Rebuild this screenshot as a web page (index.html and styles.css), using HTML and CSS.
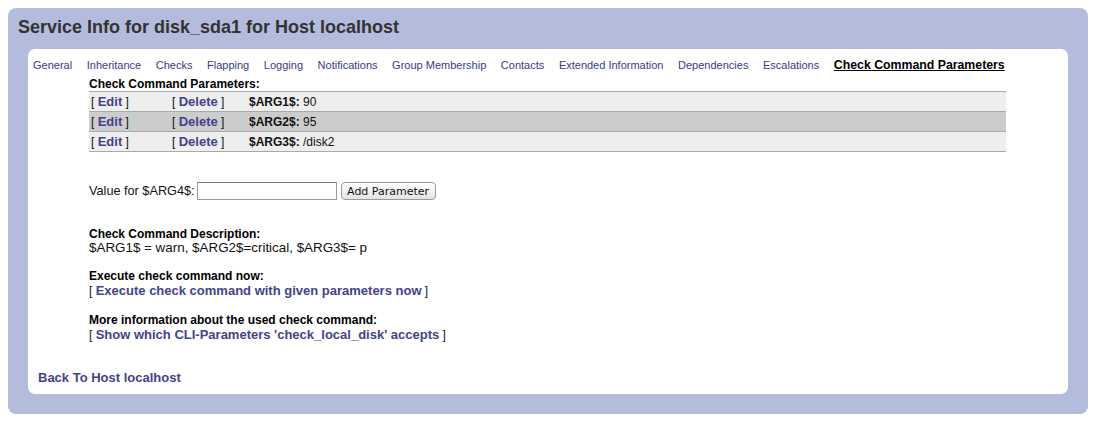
FILE: index.html
```html
<!DOCTYPE html>
<html>
<head>
<meta charset="utf-8">
<link rel="stylesheet" href="styles.css">
</head>
<body>
<div class="panel">
  <h1 class="title">Service Info for disk_sda1 for Host localhost</h1>
  <div class="box">
    <nav class="tabs">
      <a class="tab">General</a>
      <a class="tab">Inheritance</a>
      <a class="tab">Checks</a>
      <a class="tab">Flapping</a>
      <a class="tab">Logging</a>
      <a class="tab">Notifications</a>
      <a class="tab">Group Membership</a>
      <a class="tab">Contacts</a>
      <a class="tab">Extended Information</a>
      <a class="tab">Dependencies</a>
      <a class="tab">Escalations</a>
      <a class="tab active">Check Command Parameters</a>
    </nav>
    <div class="content">
      <div class="heading">Check Command Parameters:</div>
      <div class="params">
        <div class="prow light">
          <span class="c1">[ <a class="lnk">Edit</a> ]</span>
          <span class="c2">[ <a class="lnk">Delete</a> ]</span>
          <span class="c3"><b>$ARG1$:</b> 90</span>
        </div>
        <div class="prow dark">
          <span class="c1">[ <a class="lnk">Edit</a> ]</span>
          <span class="c2">[ <a class="lnk">Delete</a> ]</span>
          <span class="c3"><b>$ARG2$:</b> 95</span>
        </div>
        <div class="prow light last">
          <span class="c1">[ <a class="lnk">Edit</a> ]</span>
          <span class="c2">[ <a class="lnk">Delete</a> ]</span>
          <span class="c3"><b>$ARG3$:</b> /disk2</span>
        </div>
      </div>
      <form class="addform">
        <label class="addlabel">Value for $ARG4$:</label>
        <input class="addinput" type="text">
        <button class="addbtn" type="button">Add Parameter</button>
      </form>
      <div class="block first">
        <div class="heading">Check Command Description:</div>
        <div class="desc">$ARG1$ = warn, $ARG2$=critical, $ARG3$= p</div>
      </div>
      <div class="block">
        <div class="heading">Execute check command now:</div>
        <div class="linkline">[ <a class="lnk">Execute check command with given parameters now</a> ]</div>
      </div>
      <div class="block">
        <div class="heading">More information about the used check command:</div>
        <div class="linkline">[ <a class="lnk">Show which CLI-Parameters 'check_local_disk' accepts</a> ]</div>
      </div>
    </div>
    <a class="lnk back">Back To Host localhost</a>
  </div>
</div>
</body>
</html>
```
FILE: styles.css
```css
html, body {
  margin: 0;
  padding: 0;
  background: #ffffff;
}
body {
  padding: 8px;
  font-family: "Liberation Sans", Arial, sans-serif;
  font-size: 12px;
  color: #111;
}
.panel {
  background: #b4bcdd;
  border-radius: 8px;
  width: 1080px;
  height: 406px;
  box-sizing: border-box;
  padding: 9px 20px 20px 10px;
  display: flex;
  flex-direction: column;
}
.title {
  margin: 0 0 11px 0;
  font-size: 18px;
  line-height: 21px;
  font-weight: bold;
  color: #333333;
}
.box {
  background: #ffffff;
  border-radius: 7px;
  margin-left: 10px;
  flex: 1;
  padding: 10px 0 0 5px;
  display: flex;
  flex-direction: column;
}
.tabs {
  display: flex;
  gap: 14.6px;
  align-items: baseline;
  font-size: 11px;
  line-height: 13px;
}
.tab {
  color: #3b3b82;
  text-decoration: none;
  white-space: nowrap;
}
.tab.active {
  color: #000;
  font-weight: bold;
  font-size: 12.3px;
  text-decoration: underline;
}
.content {
  margin-left: 56px;
  margin-top: 5px;
  width: 917px;
  line-height: 14px;
}
.heading {
  font-weight: bold;
  color: #000;
}
.params {
  display: flex;
  flex-direction: column;
}
.prow {
  display: flex;
  align-items: center;
  height: 19px;
  border-top: 1px solid #aaaaaa;
  padding-left: 2px;
}
.prow.last {
  border-bottom: 1px solid #aaaaaa;
}
.prow.light { background: #eeeeee; }
.prow.dark { background: #cccccc; }
.c1 { width: 81px; }
.c2 { width: 77px; }
.lnk {
  color: #43438a;
  font-weight: bold;
  font-size: 13px;
  text-decoration: none;
}
.addform {
  display: flex;
  align-items: center;
  height: 20px;
  margin: 29px 0 0 0;
  font-size: 12.7px;
}
.addlabel { margin-right: 2px; }
.addinput {
  width: 140px;
  height: 18px;
  box-sizing: border-box;
  border: 1px solid #9a9a9a;
  border-top-color: #7a7a7a;
  margin: 0 4px 0 0;
  padding: 0 2px;
}
.addbtn {
  height: 18px;
  width: 95px;
  box-sizing: border-box;
  border: 1px solid #9a9a9a;
  border-radius: 4px;
  background: linear-gradient(#ffffff, #e4e4e4);
  font-family: "DejaVu Sans", sans-serif;
  font-size: 11px;
  color: #111;
  padding: 0;
}
.desc { font-size: 13.4px; }
.linkline { line-height: 15px; }
.block { margin-top: 14px; }
.block.first { margin-top: 26px; }
.back {
  margin: auto 0 9px 5px;
  line-height: 14px;
  align-self: flex-start;
}
```
